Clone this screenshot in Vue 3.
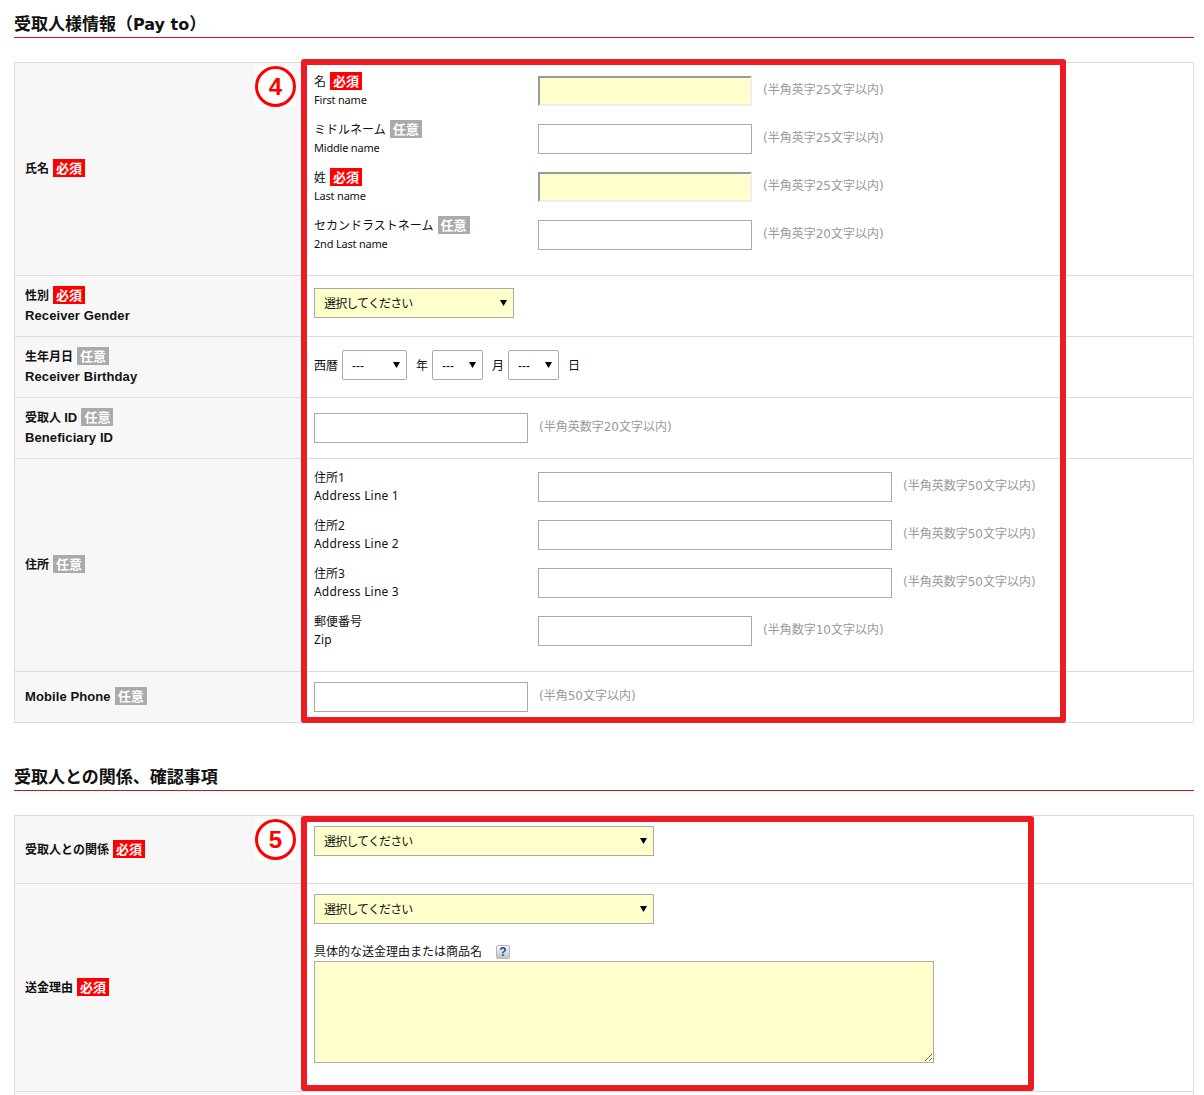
<script setup>
const names = [
  { label: '名', sub: 'First name', req: true, note: '(半角英字25文字以内)' },
  { label: 'ミドルネーム', sub: 'Middle name', req: false, note: '(半角英字25文字以内)' },
  { label: '姓', sub: 'Last name', req: true, note: '(半角英字25文字以内)' },
  { label: 'セカンドラストネーム', sub: '2nd Last name', req: false, note: '(半角英字20文字以内)' }
]
const addresses = [
  { label: '住所1', sub: 'Address Line 1', wide: true, note: '(半角英数字50文字以内)' },
  { label: '住所2', sub: 'Address Line 2', wide: true, note: '(半角英数字50文字以内)' },
  { label: '住所3', sub: 'Address Line 3', wide: true, note: '(半角英数字50文字以内)' },
  { label: '郵便番号', sub: 'Zip', wide: false, note: '(半角数字10文字以内)' }
]
</script>

<template>
  <div class="page">
    <h2 class="heading">受取人様情報（<span class="heading-latin">Pay to</span>）</h2>
    <div class="table">
      <div class="row">
        <div class="head"><div>氏名 <span class="badge req">必須</span></div></div>
        <div class="field names">
          <div v-for="n in names" :key="n.sub" class="sub-row">
            <div class="sub-label">
              <div class="jp">{{ n.label }} <span class="badge" :class="n.req ? 'req' : 'opt'">{{ n.req ? '必須' : '任意' }}</span></div>
              <div class="en small">{{ n.sub }}</div>
            </div>
            <input class="text mid" :class="{ required: n.req }" type="text" />
            <span class="note">{{ n.note }}</span>
          </div>
        </div>
      </div>
      <div class="row">
        <div class="head"><div>性別 <span class="badge req">必須</span></div><div class="latin">Receiver Gender</div></div>
        <div class="field gender">
          <select class="select yellow w200"><option>選択してください</option></select>
        </div>
      </div>
      <div class="row">
        <div class="head"><div>生年月日 <span class="badge opt">任意</span></div><div class="latin">Receiver Birthday</div></div>
        <div class="field birth">
          <span>西暦</span>
          <select class="select plain y"><option>---</option></select>
          <span class="unit">年</span>
          <select class="select plain md"><option>---</option></select>
          <span class="unit">月</span>
          <select class="select plain md"><option>---</option></select>
          <span class="unit">日</span>
        </div>
      </div>
      <div class="row">
        <div class="head"><div>受取人 <span class="latin">ID</span> <span class="badge opt">任意</span></div><div class="latin">Beneficiary ID</div></div>
        <div class="field single">
          <input class="text mid" type="text" />
          <span class="note">(半角英数字20文字以内)</span>
        </div>
      </div>
      <div class="row">
        <div class="head"><div>住所 <span class="badge opt">任意</span></div></div>
        <div class="field names">
          <div v-for="a in addresses" :key="a.sub" class="sub-row">
            <div class="sub-label addr">
              <div class="jp">{{ a.label }}</div>
              <div class="en">{{ a.sub }}</div>
            </div>
            <input class="text" :class="a.wide ? 'wide' : 'mid'" type="text" />
            <span class="note">{{ a.note }}</span>
          </div>
        </div>
      </div>
      <div class="row">
        <div class="head"><div><span class="latin">Mobile Phone</span> <span class="badge opt">任意</span></div></div>
        <div class="field mobile">
          <input class="text mid" type="text" />
          <span class="note">(半角50文字以内)</span>
        </div>
      </div>
      <div class="callout callout-4"></div>
      <div class="num num-4"><span>4</span></div>
    </div>

    <h2 class="heading second">受取人との関係、確認事項</h2>
    <div class="table last">
      <div class="row">
        <div class="head"><div>受取人との関係 <span class="badge req">必須</span></div></div>
        <div class="field relation">
          <select class="select yellow w340"><option>選択してください</option></select>
        </div>
      </div>
      <div class="row">
        <div class="head"><div>送金理由 <span class="badge req">必須</span></div></div>
        <div class="field reason">
          <select class="select yellow w340"><option>選択してください</option></select>
          <div class="reason-label">具体的な送金理由または商品名<span class="help">?</span></div>
          <textarea class="area"></textarea>
        </div>
      </div>
      <div class="row stub"><div class="head"></div><div></div></div>
      <div class="callout callout-5"></div>
      <div class="num num-5"><span>5</span></div>
    </div>
  </div>
</template>

<style scoped>
.page {
  width: 1180px;
  padding: 12px 0 0 14px;
  font-family: "Noto Sans", "Noto Sans CJK JP", sans-serif;
  font-size: 12px;
  color: #111;
}
.heading {
  margin: 0 0 24px;
  height: 25px;
  line-height: 24px;
  font-size: 17px;
  font-weight: 700;
  font-family: "DejaVu Sans", "Noto Sans CJK JP", sans-serif;
  border-bottom: 1px solid #d0121b;
}
.heading-latin { font-size: 16px; }
.second { margin-top: 42px; }
.table {
  position: relative;
  border: 1px solid #ddd;
  border-bottom: 0;
}
.row {
  display: grid;
  grid-template-columns: 288px 1fr;
  border-bottom: 1px solid #ddd;
}
.stub { height: 3px; border-bottom: 0; overflow: hidden; }
.head {
  background: #f7f7f7;
  padding-left: 10px;
  display: flex;
  flex-direction: column;
  justify-content: center;
  font-size: 12px;
  font-weight: 700;
  line-height: 20px;
}
.head > div { height: 20px; }
.latin {
  font-family: "Liberation Sans", sans-serif;
  font-size: 13px;
  letter-spacing: 0.1px;
}
.badge {
  display: inline-block;
  width: 32px;
  height: 18px;
  line-height: 18px;
  margin-left: 1px;
  text-align: center;
  color: #fff;
  font-size: 13px;
  font-weight: 700;
  vertical-align: 0;
}
.req { background: #f00; }
.opt { background: #aaa; }
.field { padding-left: 11px; display: flex; }
.names { flex-direction: column; gap: 18px; padding-top: 13px; padding-bottom: 25px; }
.gender { padding-top: 12px; padding-bottom: 18px; }
.birth { align-items: center; padding-top: 13px; padding-bottom: 17px; }
.single { align-items: center; padding-top: 15px; padding-bottom: 15px; }
.mobile { align-items: center; padding-top: 10px; padding-bottom: 10px; }
.relation { padding-top: 10px; padding-bottom: 27px; }
.reason { flex-direction: column; align-items: flex-start; padding-top: 10px; padding-bottom: 28px; }
.sub-row { display: flex; align-items: center; height: 30px; }
.sub-label { width: 224px; flex: none; align-self: flex-start; margin-top: -4px; }
.sub-label.addr { margin-top: -3px; }
.sub-label .jp { height: 18px; line-height: 18px; font-size: 12px; }
.sub-label .en { line-height: 18px; letter-spacing: 0.2px; }
.sub-label .small { font-size: 11px; line-height: 20px; letter-spacing: -0.2px; }
.text {
  box-sizing: border-box;
  height: 30px;
  border: 1px solid #aaa;
  background: #fff;
  padding: 0 4px;
  margin: 0;
  flex: none;
}
.mid { width: 214px; }
.wide { width: 354px; }
.required {
  background: #ffc;
  border-width: 2px;
  border-style: solid;
  border-color: #999 #eee #eee #999;
}
.note {
  color: #999;
  margin-left: 11px;
  font-family: "DejaVu Sans", "Noto Sans CJK JP", sans-serif;
  font-size: 12px;
  position: relative;
  top: -3px;
}
.select {
  appearance: none;
  box-sizing: border-box;
  height: 30px;
  margin: 0;
  flex: none;
  font-family: "Liberation Sans", "Noto Sans CJK JP", sans-serif;
  font-size: 12px;
  letter-spacing: -0.85px;
  color: #111;
  padding: 2px 5px 0 9px;
  background-image: url("data:image/svg+xml,%3Csvg xmlns='http://www.w3.org/2000/svg' width='7' height='6'%3E%3Cpath d='M0 0h7L3.5 6z' fill='%23000'/%3E%3C/svg%3E");
  background-repeat: no-repeat;
  background-position: right 6px top 11px;
}
.yellow { background-color: #ffc; border: 1px solid #aaa; border-radius: 0; }
.plain { background-color: #fff; border: 1px solid #aaa; border-radius: 2px; letter-spacing: 0; }
.w200 { width: 200px; }
.w340 { width: 340px; }
.y { width: 65px; margin-left: 4px; }
.md { width: 51px; }
.unit { margin: 0 4px 0 9px; }
.reason-label {
  margin-top: 18px;
  height: 19px;
  line-height: 17px;
  font-size: 12px;
  display: flex;
  align-items: center;
}
.help {
  box-sizing: border-box;
  margin-left: 14px;
  width: 14px;
  height: 14px;
  border: 1px solid #b5b5b5;
  border-radius: 2px;
  background: linear-gradient(#f7f7f7, #c4c4c4);
  color: #17479c;
  font-family: "Liberation Sans", sans-serif;
  font-size: 12px;
  font-weight: 700;
  line-height: 12px;
  text-align: center;
}
.area {
  display: block;
  box-sizing: border-box;
  width: 620px;
  height: 102px;
  margin: 0;
  border: 1px solid #aaa;
  background: #ffc;
}
.callout {
  position: absolute;
  box-sizing: border-box;
  border: 6px solid #ed1c24;
  border-radius: 3px;
  left: 286px;
  pointer-events: none;
}
.callout-4 { top: -4px; width: 765px; height: 664px; }
.callout-5 { top: 0; width: 733px; height: 275px; }
.num {
  position: absolute;
  left: 240px;
  top: 3px;
  width: 41px;
  height: 41px;
  background: #fff;
}
.num span {
  display: block;
  box-sizing: border-box;
  width: 41px;
  height: 41px;
  border: 3px solid #f00;
  border-radius: 50%;
  color: #f00;
  font-family: "Liberation Sans", sans-serif;
  font-weight: 700;
  font-size: 24px;
  line-height: 35px;
  text-align: center;
}
</style>

<style>
html, body { margin: 0; background: #fff; }
</style>
